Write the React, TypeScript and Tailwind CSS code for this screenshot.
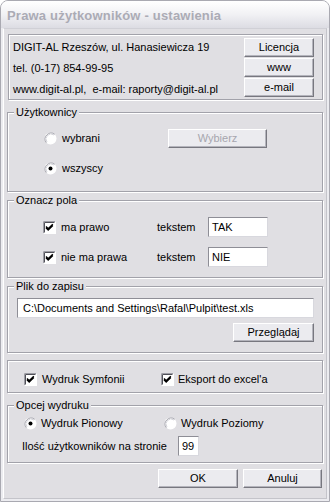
import React from "react";

const BG = "bg-[#e0dfe3]";

function Radio({ checked }: { checked?: boolean }) {
  return (
    <svg width="13" height="13" viewBox="0 0 13 13" className="shrink-0">
      <circle cx="6.5" cy="6.5" r="6" fill="#ffffff" />
      <path d="M2.3 10.7 A6 6 0 0 1 10.7 2.3" stroke="#a4a4ac" strokeWidth="1" fill="none" />
      <path d="M3 10 A5 5 0 0 1 10 3" stroke="#d4d4da" strokeWidth="1" fill="none" />
      {checked && <circle cx="6.5" cy="6.5" r="2" fill="#000" />}
    </svg>
  );
}

function Check({ checked }: { checked?: boolean }) {
  return (
    <svg width="13" height="13" viewBox="0 0 13 13" className="shrink-0">
      <rect x="0" y="0" width="13" height="13" fill="#ffffff" />
      <path d="M0.5 12.5V0.5H12.5" stroke="#9c9ca4" fill="none" />
      <path d="M1.5 11.5V1.5H11.5" stroke="#505058" fill="none" />
      <path d="M12.5 0.5V12.5H0.5" stroke="#ffffff" fill="none" />
      {checked && (
        <path d="M3 5.5 L5.2 7.8 L9.8 3.2 M3 6.8 L5.2 9.1 L9.8 4.5" stroke="#000" strokeWidth="1.4" fill="none" />
      )}
    </svg>
  );
}

function Btn({ children, w, disabled }: { children: React.ReactNode; w: string; disabled?: boolean }) {
  return (
    <div
      className={`${w} h-[19px] flex items-center justify-center bg-[#ebebef] border border-t-white border-l-white border-b-[#77777f] border-r-[#77777f] shadow-[inset_-1px_-1px_0_#b4b4bc] ${
        disabled ? "text-[#a6a6ae]" : "text-black"
      }`}
    >
      {children}
    </div>
  );
}

function Input({ value, w, pl = "pl-[3px]" }: { value: string; w: string; pl?: string }) {
  return (
    <div className={`${w} h-[20px] bg-white border border-t-[#8e8e96] border-l-[#8e8e96] border-b-[#d8d8de] border-r-[#d8d8de] flex items-center ${pl} whitespace-nowrap overflow-hidden`}>
      {value}
    </div>
  );
}

function Group({ label, h, mt, children }: { label?: string; h: string; mt: string; children: React.ReactNode }) {
  return (
    <div className={`relative ${mt} ml-[3px] w-[316px] ${h} border border-[#a2a2aa] shadow-[inset_1px_1px_0_#ffffff,1px_1px_0_#ffffff] shrink-0`}>
      {label && (
        <div className={`absolute left-[6px] top-[-8px] px-[2px] leading-[14px] ${BG}`}>{label}</div>
      )}
      {children}
    </div>
  );
}

export default function App() {
  return (
    <div className="w-[330px] h-[502px] bg-white font-['Liberation_Sans',Arial,sans-serif] text-[11px] text-black">
      <div className="w-full h-full flex flex-col rounded-t-[8px] border border-[#a9a9b1] bg-[#ececf0] overflow-hidden">
        <div className="h-[27px] shrink-0 flex items-center pl-[6px] pt-[2px] bg-gradient-to-b from-[#ffffff] via-[#f1f1f4] to-[#dcdce3] text-[#ababb5] font-bold text-[13px] tracking-[0.2px]">
          Prawa użytkowników - ustawienia
        </div>
        <div className={`flex-1 mx-[2px] mb-[2px] border border-t-[#d0d0d6] border-l-white border-r-[#c4c4ca] border-b-[#c4c4ca] ${BG} flex flex-col`}>
          {/* info box */}
          <div className="mt-[5px] ml-[4px] w-[315px] h-[66px] shrink-0 border border-[#a2a2aa] shadow-[inset_1px_1px_0_#ffffff,1px_1px_0_#ffffff] flex justify-between">
            <div className="pl-[4px] pt-[2px] flex flex-col leading-[21px]">
              <div>DIGIT-AL Rzeszów, ul. Hanasiewicza 19</div>
              <div>tel. (0-17) 854-99-95</div>
              <div className="whitespace-pre">www.digit-al.pl,  e-mail: raporty@digit-al.pl</div>
            </div>
            <div className="pr-[8px] pt-[3px] flex flex-col gap-[1px]">
              <Btn w="w-[70px]">Licencja</Btn>
              <Btn w="w-[70px]">www</Btn>
              <Btn w="w-[70px]">e-mail</Btn>
            </div>
          </div>

          <Group label="Użytkownicy" h="h-[80px]" mt="mt-[12px]">
            <div className="flex items-center h-[19px] mt-[16px] pl-[36px]">
              <div className="flex items-center gap-[5px] w-[124px]">
                <Radio />
                <span>wybrani</span>
              </div>
              <Btn w="w-[99px]" disabled>Wybierz</Btn>
            </div>
            <div className="flex items-center h-[19px] mt-[11px] pl-[36px] gap-[5px]">
              <Radio checked />
              <span>wszyscy</span>
            </div>
          </Group>

          <Group label="Oznacz pola" h="h-[78px]" mt="mt-[8px]">
            <div className="flex items-center h-[20px] mt-[16px] pl-[35px]">
              <div className="flex items-center gap-[5px] w-[114px]">
                <Check checked />
                <span>ma prawo</span>
              </div>
              <span className="w-[51px]">tekstem</span>
              <Input value="TAK" w="w-[60px]" />
            </div>
            <div className="flex items-center h-[20px] mt-[10px] pl-[35px]">
              <div className="flex items-center gap-[5px] w-[114px]">
                <Check checked />
                <span>nie ma prawa</span>
              </div>
              <span className="w-[51px]">tekstem</span>
              <Input value="NIE" w="w-[60px]" />
            </div>
          </Group>

          <Group label="Plik do zapisu" h="h-[67px]" mt="mt-[8px]">
            <div className="mt-[11px] ml-[9px]">
              <Input value="C:\Documents and Settings\Rafal\Pulpit\test.xls" w="w-[297px]" pl="pl-[5px]" />
            </div>
            <div className="mt-[5px] ml-[225px]">
              <Btn w="w-[81px]">Przeglądaj</Btn>
            </div>
          </Group>

          <Group h="h-[33px]" mt="mt-[7px]">
            <div className="flex items-center h-[17px] mt-[10px] pl-[16px]">
              <div className="flex items-center gap-[5px] w-[137px]">
                <Check checked />
                <span>Wydruk Symfonii</span>
              </div>
              <div className="flex items-center gap-[4px]">
                <Check checked />
                <span>Eksport do excel'a</span>
              </div>
            </div>
          </Group>

          <Group label="Opcej wydruku" h="h-[58px]" mt="mt-[12px]">
            <div className="flex items-center h-[17px] mt-[9px] pl-[16px]">
              <div className="flex items-center gap-[4px] w-[140px]">
                <Radio checked />
                <span>Wydruk Pionowy</span>
              </div>
              <div className="flex items-center gap-[4px]">
                <Radio />
                <span>Wydruk Poziomy</span>
              </div>
            </div>
            <div className="flex items-center h-[20px] mt-[4px] pl-[14px]">
              <span className="w-[156px]">Ilość użytkowników na stronie</span>
              <Input value="99" w="w-[21px]" />
            </div>
          </Group>

          <div className="mt-[6px] flex pl-[154px] gap-[5px]">
            <Btn w="w-[80px]">OK</Btn>
            <Btn w="w-[79px]">Anuluj</Btn>
          </div>
        </div>
      </div>
    </div>
  );
}
